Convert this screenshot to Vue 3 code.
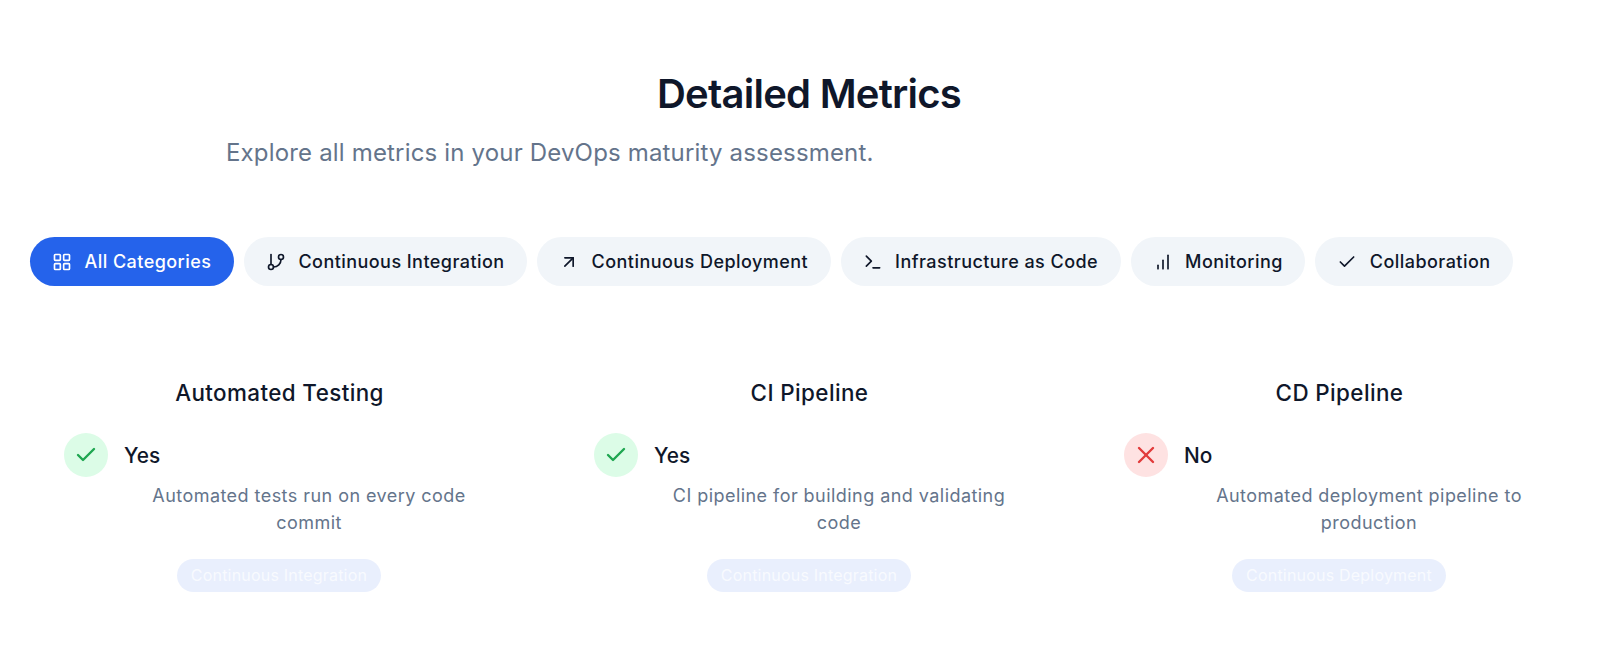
<script setup>
const filters = [
  { label: 'All Categories', icon: 'grid', active: true },
  { label: 'Continuous Integration', icon: 'branch' },
  { label: 'Continuous Deployment', icon: 'arrow' },
  { label: 'Infrastructure as Code', icon: 'terminal' },
  { label: 'Monitoring', icon: 'bars' },
  { label: 'Collaboration', icon: 'check' },
]
const metrics = [
  { title: 'Automated Testing', yes: true, desc: 'Automated tests run on every code commit', tag: 'Continuous Integration' },
  { title: 'CI Pipeline', yes: true, desc: 'CI pipeline for building and validating code', tag: 'Continuous Integration' },
  { title: 'CD Pipeline', yes: false, desc: 'Automated deployment pipeline to production', tag: 'Continuous Deployment' },
]
</script>

<template>
  <div class="page">
    <h2 class="title">Detailed Metrics</h2>
    <p class="subtitle">Explore all metrics in your DevOps maturity assessment.</p>
    <div class="filters">
      <button v-for="f in filters" :key="f.label" class="pill" :class="{ active: f.active }">
        <svg class="ic" viewBox="0 0 24 24" fill="none" stroke="currentColor" stroke-width="2" stroke-linecap="round" stroke-linejoin="round">
          <template v-if="f.icon === 'grid'">
            <rect x="3" y="3" width="7" height="7" rx="1" />
            <rect x="14" y="3" width="7" height="7" rx="1" />
            <rect x="14" y="14" width="7" height="7" rx="1" />
            <rect x="3" y="14" width="7" height="7" rx="1" />
          </template>
          <template v-else-if="f.icon === 'branch'">
            <line x1="6" y1="3" x2="6" y2="15" />
            <circle cx="18" cy="6" r="3" />
            <circle cx="6" cy="18" r="3" />
            <path d="M18 9a9 9 0 0 1-9 9" />
          </template>
          <template v-else-if="f.icon === 'arrow'">
            <path d="M7 7h10v10" />
            <path d="M7 17 17 7" />
          </template>
          <template v-else-if="f.icon === 'terminal'">
            <polyline points="4 17 10 11 4 5" />
            <line x1="12" y1="19" x2="20" y2="19" />
          </template>
          <template v-else-if="f.icon === 'bars'">
            <line x1="18" y1="20" x2="18" y2="4" />
            <line x1="12" y1="20" x2="12" y2="10" />
            <line x1="6" y1="20" x2="6" y2="16" />
          </template>
          <polyline v-else points="20 6 9 17 4 12" />
        </svg>
        <span>{{ f.label }}</span>
      </button>
    </div>
    <div class="grid">
      <article v-for="m in metrics" :key="m.title" class="card">
        <h3 class="card-title">{{ m.title }}</h3>
        <div class="status">
          <span class="badge" :class="m.yes ? 'yes' : 'no'">
            <svg class="status-ic" viewBox="0 0 24 24" fill="none" stroke="currentColor" stroke-width="2.4" stroke-linecap="round" stroke-linejoin="round">
              <polyline v-if="m.yes" points="20 6 9 17 4 12" />
              <template v-else>
                <path d="M19 5 5 19" />
                <path d="m5 5 14 14" />
              </template>
            </svg>
          </span>
          <span class="answer">{{ m.yes ? 'Yes' : 'No' }}</span>
        </div>
        <p class="desc">{{ m.desc }}</p>
        <span class="tag">{{ m.tag }}</span>
      </article>
    </div>
  </div>
</template>

<style>
body { background: #fff; }
</style>

<style scoped>
.page {
  box-sizing: border-box;
  width: 1600px;
  height: 655px;
  overflow: hidden;
  padding: 70px 12px 0 30px;
  font-family: Inter, "Liberation Sans", sans-serif;
  color: #0f172a;
  background: #fff;
}
.title {
  margin: 0;
  text-align: center;
  font-size: 40px;
  line-height: 48px;
  font-weight: 600;
  letter-spacing: -0.75px;
}
.subtitle {
  margin: 17px 0 0 196px;
  font-size: 24px;
  line-height: 36px;
  letter-spacing: 0.17px;
  color: #64748b;
}
.filters {
  display: flex;
  gap: 10px;
  margin-top: 66px;
}
.pill {
  display: flex;
  align-items: center;
  gap: 12.5px;
  height: 49px;
  padding: 0 22.5px 0 22px;
  border: 0;
  border-radius: 25px;
  background: #f1f5f9;
  color: #0f172a;
  font: 500 18px Inter, "Liberation Sans", sans-serif;
  letter-spacing: 0.45px;
}
.pill.active {
  background: #2563eb;
  color: #fff;
}
.ic {
  width: 20px;
  height: 20px;
  flex: none;
}
.grid {
  display: grid;
  grid-template-columns: repeat(3, 1fr);
  gap: 32px;
  margin-top: 89px;
}
.card {
  display: flex;
  flex-direction: column;
  align-items: center;
  padding: 0 34px;
}
.card-title {
  margin: 0 0 0 1px;
  font-size: 22.4px;
  line-height: 36px;
  font-weight: 500;
  letter-spacing: 0.4px;
}
.status {
  display: flex;
  align-items: center;
  gap: 16px;
  align-self: stretch;
  margin-top: 22px;
}
.badge {
  display: flex;
  align-items: center;
  justify-content: center;
  width: 44px;
  height: 44px;
  border-radius: 50%;
}
.badge.yes { background: #dcfce7; color: #1fa651; }
.badge.no { background: #fee2e2; color: #e23b3b; }
.status-ic { width: 24px; height: 24px; }
.answer {
  font-size: 20.8px;
  font-weight: 500;
}
.desc {
  align-self: stretch;
  margin: 5px 0 0 60px;
  text-align: center;
  font-size: 18px;
  line-height: 27px;
  letter-spacing: 0.45px;
  color: #64748b;
}
.tag {
  margin-top: 23px;
  padding: 0 14px;
  height: 33px;
  line-height: 33px;
  border-radius: 17px;
  background: rgba(37, 99, 235, 0.1);
  color: rgba(255, 255, 255, 0.7);
  font-size: 16px;
  font-weight: 400;
  letter-spacing: 0.2px;
}
</style>
